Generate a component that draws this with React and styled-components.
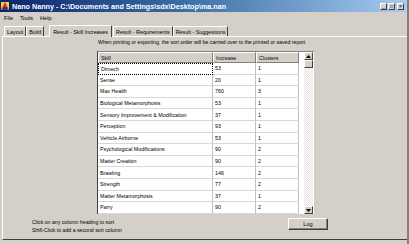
import React from 'react';
import styled, { createGlobalStyle, css } from 'styled-components';

const GlobalStyle = createGlobalStyle`
  html, body {
    margin: 0;
    padding: 0;
    background: #d4d0c8;
  }
  body {
    font-family: 'Liberation Sans', Arial, sans-serif;
    -webkit-font-smoothing: antialiased;
  }
`;

const skills = [
  ['Dimech', 53, 1],
  ['Sense', 20, 1],
  ['Max Health', 760, 3],
  ['Biological Metamorphosis', 53, 1],
  ['Sensory Improvement & Modification', 37, 1],
  ['Perception', 93, 1],
  ['Vehicle Airborne', 53, 1],
  ['Psychological Modifications', 90, 2],
  ['Matter Creation', 90, 2],
  ['Brawling', 146, 2],
  ['Strength', 77, 2],
  ['Matter Metamorphosis', 37, 1],
  ['Parry', 90, 2],
];

const Window = styled.div`
  width: 409px;
  height: 244px;
  display: flex;
  flex-direction: column;
  background: #d4d0c8;
  box-sizing: border-box;
  border-right: 2px solid #808080;
  overflow: hidden;
`;

const TitleBar = styled.div`
  height: 12px;
  display: flex;
  align-items: center;
  gap: 3px;
  padding: 0 3px 0 1px;
  background: linear-gradient(to right, #0a246a 0%, #3a6ea5 45%, #a6caf0 100%);
`;

const Title = styled.div`
  flex: 1;
  color: #fff;
  font-weight: bold;
  font-size: 7.2px;
  white-space: nowrap;
`;

const Caption = styled.div`
  display: flex;
  gap: 1px;
`;

const CapButton = styled.div`
  width: 7px;
  height: 7px;
  box-sizing: border-box;
  background: #d4d0c8;
  border: 1px solid;
  border-color: #fff #404040 #404040 #fff;
  margin-left: ${(p) => (p.$gap ? '1px' : '0')};
  display: flex;
  align-items: center;
  justify-content: center;
  font-size: 5px;
  line-height: 1;
  color: #000;
`;

const MenuBar = styled.div`
  height: 11px;
  display: flex;
  align-items: center;
  gap: 7px;
  padding-left: 4px;
  font-size: 5.6px;
  color: #000;
`;

const TabStrip = styled.div`
  height: 13px;
  display: flex;
  align-items: flex-end;
  padding-left: 4px;
`;

const Tab = styled.div`
  height: 10px;
  box-sizing: border-box;
  padding: 0 2px;
  display: flex;
  align-items: center;
  font-size: 5.4px;
  white-space: nowrap;
  color: #000;
  border-left: 1px solid #fff;
  border-top: 1px solid #fff;
  border-right: 1px solid #404040;
  ${(p) =>
    p.$active &&
    css`
      height: 12px;
      margin: 0 1px 0 5px;
      padding: 0 3px;
      position: relative;
      top: 1px;
      background: #d4d0c8;
    `}
`;

const Panel = styled.div`
  flex: 1;
  margin: 0 0 4px 2px;
  border-top: 1px solid #fff;
  border-left: 1px solid #fff;
  border-bottom: 1px solid #404040;
  display: flex;
  flex-direction: column;
`;

const Note = styled.div`
  margin: 2px 0 0 95px;
  height: 9px;
  font-size: 5.2px;
  white-space: nowrap;
  color: #000;
`;

const GridBox = styled.div`
  margin: 3px 0 0 94px;
  width: 217px;
  height: 163px;
  box-sizing: border-box;
  border-left: 1px solid #404040;
  border-top: 1px solid #808080;
  background: #fff;
  display: flex;
`;

const Table = styled.div`
  width: 201px;
  display: grid;
  grid-template-columns: 115px 43px 43px;
  grid-auto-rows: 11.6px;
  grid-template-rows: 11px;
  align-content: start;
`;

const HeadCell = styled.div`
  box-sizing: border-box;
  background: #d4d0c8;
  border: 1px solid;
  border-color: #fff #808080 #808080 #fff;
  font-size: 5.3px;
  padding-left: 2px;
  display: flex;
  align-items: center;
  color: #000;
`;

const Cell = styled.div`
  box-sizing: border-box;
  border-right: 1px solid #c0c0c0;
  border-bottom: 1px solid #d8d8d8;
  font-size: 5.3px;
  padding-left: 2px;
  display: flex;
  align-items: center;
  white-space: nowrap;
  overflow: hidden;
  color: #000;
  ${(p) =>
    p.$first &&
    css`
      border: 1px dotted #000;
    `}
`;

const Gap = styled.div`
  flex: 1;
`;

const ScrollBar = styled.div`
  width: 9px;
  display: flex;
  flex-direction: column;
  background-color: #f0efeb;
  background-image: repeating-conic-gradient(#ffffff 0 25%, #e6e3dc 0 50%);
  background-size: 2px 2px;
  margin-right: 1px;
`;

const ScrollBtn = styled.div`
  height: 8px;
  box-sizing: border-box;
  background: #d4d0c8;
  border: 1px solid;
  border-color: #fff #404040 #404040 #fff;
  display: flex;
  align-items: center;
  justify-content: center;
`;

const Track = styled.div`
  flex: 1;
`;

const Footer = styled.div`
  display: flex;
  align-items: flex-start;
  margin-top: 4px;
`;

const Hints = styled.div`
  margin-left: 29px;
  font-size: 5.2px;
  line-height: 8px;
  color: #000;
  width: 256px;
`;

const LogButton = styled.div`
  width: 40px;
  height: 12px;
  box-sizing: border-box;
  border: 1px solid;
  border-color: #fff #404040 #404040 #fff;
  box-shadow: inset -1px -1px 0 #808080;
  display: flex;
  align-items: center;
  justify-content: center;
  font-size: 5.6px;
  color: #000;
`;

function Arrow({ down }) {
  return (
    <svg width="5" height="3" viewBox="0 0 5 3">
      <path d={down ? 'M0 0H5L2.5 3Z' : 'M0 3H5L2.5 0Z'} fill="#000" />
    </svg>
  );
}

function AppIcon() {
  return (
    <svg width="8" height="8" viewBox="0 0 8 8">
      <rect x="0" y="0" width="8" height="8" fill="#f4d03f" />
      <path d="M0 8L4 0L8 8Z" fill="#d32f2f" />
      <rect x="2" y="5" width="4" height="3" fill="#1e3f9e" />
    </svg>
  );
}

export default function App() {
  return (
    <>
      <GlobalStyle />
      <Window>
        <TitleBar>
          <AppIcon />
          <Title>{'Nano Nanny - C:\\Documents and Settings\\sdx\\Desktop\\ma.nan'}</Title>
          <Caption>
            <CapButton>_</CapButton>
            <CapButton>□</CapButton>
            <CapButton $gap>×</CapButton>
          </Caption>
        </TitleBar>
        <MenuBar>
          <span>File</span>
          <span>Tools</span>
          <span>Help</span>
        </MenuBar>
        <TabStrip>
          <Tab>Layout</Tab>
          <Tab>Build</Tab>
          <Tab $active>Result - Skill Increases</Tab>
          <Tab>Result - Requirements</Tab>
          <Tab>Result - Suggestions</Tab>
        </TabStrip>
        <Panel>
          <Note>
            When printing or exporting, the sort order will be carried over to the printed or saved report
          </Note>
          <GridBox>
            <Table>
              <HeadCell>Skill</HeadCell>
              <HeadCell>Increase</HeadCell>
              <HeadCell>Clusters</HeadCell>
              {skills.map(([name, inc, cl], i) => (
                <React.Fragment key={name}>
                  <Cell $first={i === 0}>{name}</Cell>
                  <Cell>{inc}</Cell>
                  <Cell>{cl}</Cell>
                </React.Fragment>
              ))}
            </Table>
            <Gap />
            <ScrollBar>
              <ScrollBtn>
                <Arrow />
              </ScrollBtn>
              <ScrollBtn />
              <Track />
              <ScrollBtn>
                <Arrow down />
              </ScrollBtn>
            </ScrollBar>
          </GridBox>
          <Footer>
            <Hints>
              Click on any column heading to sort
              <br />
              Shift-Click to add a second sort column
            </Hints>
            <LogButton>Log</LogButton>
          </Footer>
        </Panel>
      </Window>
    </>
  );
}
